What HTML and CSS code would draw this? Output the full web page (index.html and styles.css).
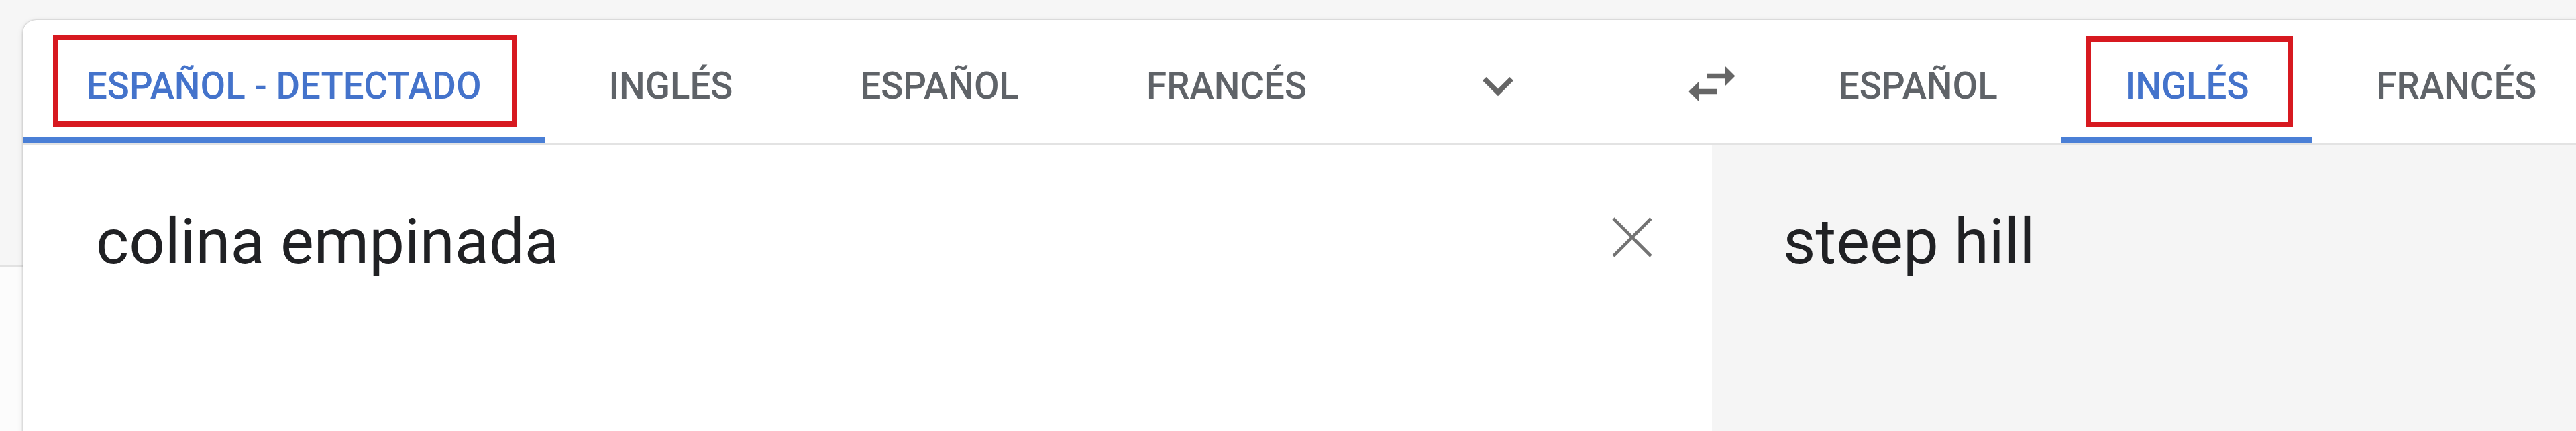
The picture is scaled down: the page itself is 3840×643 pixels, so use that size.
FILE: index.html
```html
<!DOCTYPE html>
<html>
    <head>
        <meta charset="utf-8">
        <title>Traductor</title>
        <link rel="stylesheet" href="styles.css">
    </head>
    <body>
        <div class="topband"></div>
        <main class="card">
            <header class="lang-bar">
                <div class="lang-side source-side">
                    <div class="tabs">
                        <div class="tab active"><span class="label marked mark-left">ESPAÑOL - DETECTADO</span></div>
                        <div class="tab"><span class="label">INGLÉS</span></div>
                        <div class="tab"><span class="label">ESPAÑOL</span></div>
                        <div class="tab"><span class="label">FRANCÉS</span></div>
                    </div>
                    <div class="icon-btn more">
                        <svg viewBox="0 0 24 24"><path d="M16.59 8.59L12 13.17 7.41 8.59 6 10l6 6 6-6z"/></svg>
                    </div>
                </div>
                <div class="icon-btn swap">
                    <svg viewBox="0 0 24 24"><path d="M6.99 11L3 15l3.99 4v-3H14v-2H6.99v-3zM21 9l-3.99-4v3H10v2h7.01v3L21 9z"/></svg>
                </div>
                <div class="lang-side target-side">
                    <div class="tabs">
                        <div class="tab"><span class="label">ESPAÑOL</span></div>
                        <div class="tab active"><span class="label marked mark-right">INGLÉS</span></div>
                        <div class="tab"><span class="label">FRANCÉS</span></div>
                    </div>
                </div>
            </header>
            <div class="panes">
                <div class="pane source">
                    <div class="text">colina empinada</div>
                    <div class="clear">
                        <svg viewBox="0 0 24 24"><path d="M5 5L19 19M19 5L5 19"/></svg>
                    </div>
                </div>
                <div class="pane target">
                    <div class="text">steep hill</div>
                </div>
            </div>
        </main>
    </body>
</html>
```

FILE: styles.css
```css
html, body {
margin: 0;
width: 3840px;
height: 643px;
overflow: hidden;
background-color: #fcfcfc;
font-family: Roboto, "Liberation Sans", Arial, sans-serif;
}
.topband {
height: 396px;
background-color: #f6f6f6;
border-bottom: 2px solid #e2e2e2;
}
.card {
margin: -368px -40px 0 34px;
height: 700px;
background-color: white;
border-top-left-radius: 20px;
box-shadow: 0 0 3px rgba(0,0,0,0.25), 0 2px 10px rgba(0,0,0,0.1);
display: flex;
flex-direction: column;
overflow: hidden;
}
.lang-bar {
display: grid;
grid-template-columns: 2472px 92px 1fr;
height: 183px;
border-bottom: 3px solid #e3e3e3;
}
.lang-side {
display: flex;
align-items: stretch;
}
.target-side {
padding-left: 48px;
}
.tabs {
display: flex;
}
.tab {
position: relative;
display: flex;
align-items: center;
padding: 12px 95px 0 95px;
font-size: 54.6px;
font-weight: 500;
color: #5f6368;
}
.tab .label {
position: relative;
display: block;
line-height: 64px;
white-space: nowrap;
}
.tab.active {
color: #4473cb;
}
.tab.active::after {
content: '';
position: absolute;
left: 0;
right: 0;
bottom: 0;
height: 9px;
background-color: #4a7fd6;
}
/* red annotation boxes */
.marked::after {
content: '';
position: absolute;
border: 8px solid #d71920;
}
.mark-left::after {
top: -44px;
bottom: -29px;
left: -50px;
right: -53px;
}
.mark-right::after {
top: -42px;
bottom: -30px;
left: -59px;
right: -66px;
}
.icon-btn svg {
display: block;
width: 92px;
height: 92px;
fill: #666666;
}
.more {
margin: 0 227px 0 auto;
padding-top: 52px;
}
.swap {
padding-top: 49px;
}
.panes {
flex: 1;
display: grid;
grid-template-columns: 2518px 1fr;
}
.pane {
display: flex;
align-items: flex-start;
font-size: 94px;
line-height: 127px;
color: #202124;
}
.pane .text {
flex: 1;
padding-top: 82px;
}
.source {
padding-left: 109px;
}
.target {
padding-left: 106px;
background-color: #f5f5f5;
}
.clear {
margin: 90px 71px 0 0;
}
.clear svg {
display: block;
width: 96px;
height: 96px;
fill: none;
stroke: #737373;
stroke-width: 1.15;
}
```
